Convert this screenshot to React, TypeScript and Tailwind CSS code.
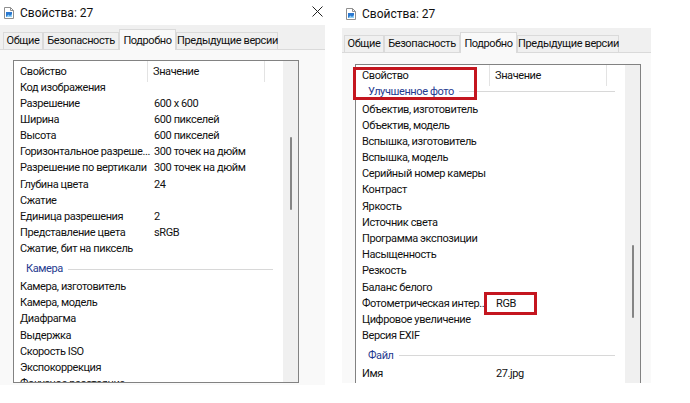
import React from "react"

type Item =
  | { kind: "row"; name: string; value?: string }
  | { kind: "group"; label: string; h: string; pt: string }

const leftItems: Item[] = [
  { kind: "row", name: "Код изображения" },
  { kind: "row", name: "Разрешение", value: "600 x 600" },
  { kind: "row", name: "Ширина", value: "600 пикселей" },
  { kind: "row", name: "Высота", value: "600 пикселей" },
  { kind: "row", name: "Горизонтальное разреше...", value: "300 точек на дюйм" },
  { kind: "row", name: "Разрешение по вертикали", value: "300 точек на дюйм" },
  { kind: "row", name: "Глубина цвета", value: "24" },
  { kind: "row", name: "Сжатие" },
  { kind: "row", name: "Единица разрешения", value: "2" },
  { kind: "row", name: "Представление цвета", value: "sRGB" },
  { kind: "row", name: "Сжатие, бит на пиксель" },
  { kind: "group", label: "Камера", h: "h-[21.5px]", pt: "pt-[3.5px]" },
  { kind: "row", name: "Камера, изготовитель" },
  { kind: "row", name: "Камера, модель" },
  { kind: "row", name: "Диафрагма" },
  { kind: "row", name: "Выдержка" },
  { kind: "row", name: "Скорость ISO" },
  { kind: "row", name: "Экспокоррекция" },
  { kind: "row", name: "Фокусное расстояние" },
]

const rightItems: Item[] = [
  { kind: "group", label: "Улучшенное фото", h: "h-[18px]", pt: "pt-0" },
  { kind: "row", name: "Объектив, изготовитель" },
  { kind: "row", name: "Объектив, модель" },
  { kind: "row", name: "Вспышка, изготовитель" },
  { kind: "row", name: "Вспышка, модель" },
  { kind: "row", name: "Серийный номер камеры" },
  { kind: "row", name: "Контраст" },
  { kind: "row", name: "Яркость" },
  { kind: "row", name: "Источник света" },
  { kind: "row", name: "Программа экспозиции" },
  { kind: "row", name: "Насыщенность" },
  { kind: "row", name: "Резкость" },
  { kind: "row", name: "Баланс белого" },
  { kind: "row", name: "Фотометрическая интер...", value: "RGB" },
  { kind: "row", name: "Цифровое увеличение" },
  { kind: "row", name: "Версия EXIF" },
  { kind: "group", label: "Файл", h: "h-[21.5px]", pt: "pt-[3.5px]" },
  { kind: "row", name: "Имя", value: "27.jpg" },
]

const tabs = ["Общие", "Безопасность", "Подробно", "Предыдущие версии"]
const tabWidths = ["w-[40px]", "w-[76px]", "w-[57px]", "w-[102px]"]

function FileIcon() {
  return (
    <svg width="10" height="12" viewBox="0 0 10 12">
      <path d="M0.5 0.5h6l3 3v8h-9z" fill="#fff" stroke="#8f8f8f" />
      <path d="M6.5 0.5v3h3" fill="none" stroke="#8f8f8f" />
      <rect x="2" y="5" width="6" height="5" fill="#2b78d0" />
      <path d="M2 10l2.5-2.5 1.5 1.5 2-2v3z" fill="#8fd0f5" />
    </svg>
  )
}

function CloseIcon() {
  return (
    <svg width="11" height="11" viewBox="0 0 11 11">
      <path d="M0.5 0.5l10 10M10.5 0.5l-10 10" stroke="#222" strokeWidth="1" />
    </svg>
  )
}

function ListBox({ items, thumbTop, height, bottomBorder }: { items: Item[]; thumbTop: string; height: string; bottomBorder: boolean }) {
  return (
    <div className={`flex w-[286px] ${height} border-x border-t ${bottomBorder ? "border-b" : ""} border-[#828282] bg-white overflow-hidden`}>
      <div className="flex-1 flex flex-col text-[11px] tracking-[-0.4px] text-[#111]">
        {/* шапка */}
        <div className="flex h-[18.5px] shrink-0 leading-[16px]">
          <div className="w-[134px] h-[21px] shrink-0 pt-[3px] pl-[6px] border-r border-[#e3e3e3]">Свойство</div>
          <div className="w-[117px] h-[21px] shrink-0 pt-[3px] pl-[5px] border-r border-[#e3e3e3]">Значение</div>
        </div>
        {items.map((it, i) =>
          it.kind === "group" ? (
            <div key={i} className={`${it.h} ${it.pt} shrink-0`}>
              <div className="w-[259px] flex items-center gap-[5px] pl-[12px] h-[16px] leading-[16px] text-[#1f3a8f]">
                <span className="whitespace-nowrap">{it.label}</span>
                <div className="flex-1 h-px bg-[#d8d8d8]" />
              </div>
            </div>
          ) : (
            <div key={i} className="flex h-[16.2px] leading-[16.2px] shrink-0 whitespace-nowrap">
              <div className="w-[139px] shrink-0 pl-[6px] overflow-hidden">{it.name}</div>
              <div className="pl-[1px]">{it.value ?? ""}</div>
            </div>
          )
        )}
      </div>
      {/* полоса прокрутки */}
      <div className="w-[15px] shrink-0 bg-[#f0f0f0] flex flex-col items-center">
        <div className={`${thumbTop} w-[2px] h-[73px] rounded-full bg-[#858585]`} />
      </div>
    </div>
  )
}

function Dialog({
  width,
  height,
  titleH,
  close,
  stripPl,
  panelPt,
  children,
}: {
  width: string
  height: string
  titleH: string
  close: boolean
  stripPl: string
  panelPt: string
  children: React.ReactNode
}) {
  return (
    <div className={`${width} ${height} flex flex-col shrink-0 overflow-hidden`}>
      <div className={`${titleH} shrink-0 bg-white flex items-center pl-[4px] pr-[2px]`}>
        <FileIcon />
        <span className="ml-[6px] text-[12px] text-[#111]">Свойства: 27</span>
        {close && (
          <div className="ml-auto mb-[2px]">
            <CloseIcon />
          </div>
        )}
      </div>
      <div className={`h-[25px] shrink-0 bg-[#f0f0f0] flex items-end ${stripPl} border-b border-[#dadada] text-[11px] tracking-[-0.4px]`}>
        {tabs.map((t, i) =>
          i === 2 ? (
            <div
              key={t}
              className={`${tabWidths[i]} h-[21px] -mb-px pt-[3px] text-center leading-[16px] bg-[#f9f9f9] border border-b-0 border-[#dadada] text-[#111]`}
            >
              {t}
            </div>
          ) : (
            <div
              key={t}
              className={`${tabWidths[i]} h-[17px] text-center leading-[16px] bg-[#f0f0f0] border border-b-0 border-[#dadada] text-[#111] whitespace-nowrap`}
            >
              {t}
            </div>
          )
        )}
      </div>
      <div className={`flex-1 bg-[#f9f9f9] pl-[13px] ${panelPt}`}>{children}</div>
    </div>
  )
}

export default function App() {
  return (
    <div className="w-[690px] h-[403px] bg-white flex items-start [font-family:Roboto,'Liberation_Sans',sans-serif]">
      <Dialog width="w-[325px]" height="h-[385px]" titleH="h-[25px]" close stripPl="pl-[3px]" panelPt="pt-[10px]">
        <ListBox items={leftItems} thumbTop="mt-[76px]" height="h-[323px]" bottomBorder />
      </Dialog>

      <div className="relative ml-[17px]">
        <Dialog width="w-[309px]" height="h-[383px]" titleH="h-[28px]" close={false} stripPl="pl-[2px]" panelPt="pt-[11px]">
          <ListBox items={rightItems} thumbTop="mt-[180px]" height="h-[330px]" bottomBorder={false} />
        </Dialog>
        {/* красные рамки-пометки */}
        <div className="absolute left-[11px] top-[67px] w-[124px] h-[33px] border-[3px] border-[#c4161f]" />
        <div className="absolute left-[142px] top-[292px] w-[53px] h-[23px] border-[3px] border-[#c4161f]" />
      </div>
    </div>
  )
}
